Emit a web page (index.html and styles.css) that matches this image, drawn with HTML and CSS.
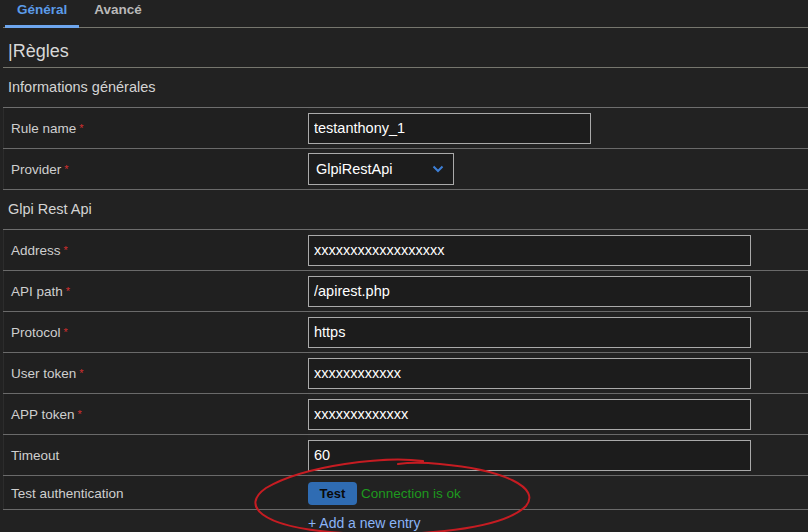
FILE: index.html
```html
<!DOCTYPE html>
<html lang="fr">
<head>
    <meta charset="UTF-8">
    <title>Règles - Glpi Rest Api</title>
    <link rel="stylesheet" href="styles.css">
</head>
<body>
    <div class="tabs">
        <a href="#" class="tab active">Général</a>
        <a href="#" class="tab">Avancé</a>
    </div>

    <div class="panel">
        <div class="title">|Règles</div>
        <div class="section">Informations générales</div>

        <div class="row">
            <div class="label">Rule name <span class="req">*</span></div>
            <div class="field"><input class="input short" type="text" value="testanthony_1"></div>
        </div>
        <div class="row">
            <div class="label">Provider <span class="req">*</span></div>
            <div class="field">
                <div class="select">
                    <span>GlpiRestApi</span>
                    <svg width="12" height="8" viewBox="0 0 12 8"><path d="M1.5 1.5 L6 6 L10.5 1.5" fill="none" stroke="#3d7fd6" stroke-width="2"/></svg>
                </div>
            </div>
        </div>

        <div class="section">Glpi Rest Api</div>

        <div class="row">
            <div class="label">Address <span class="req">*</span></div>
            <div class="field"><input class="input" type="text" value="xxxxxxxxxxxxxxxxxx"></div>
        </div>
        <div class="row">
            <div class="label">API path <span class="req">*</span></div>
            <div class="field"><input class="input" type="text" value="/apirest.php"></div>
        </div>
        <div class="row">
            <div class="label">Protocol <span class="req">*</span></div>
            <div class="field"><input class="input" type="text" value="https"></div>
        </div>
        <div class="row">
            <div class="label">User token <span class="req">*</span></div>
            <div class="field"><input class="input" type="text" value="xxxxxxxxxxxx"></div>
        </div>
        <div class="row">
            <div class="label">APP token <span class="req">*</span></div>
            <div class="field"><input class="input" type="text" value="xxxxxxxxxxxxx"></div>
        </div>
        <div class="row">
            <div class="label">Timeout</div>
            <div class="field"><input class="input" type="text" value="60"></div>
        </div>
        <div class="row row-test">
            <div class="label">Test authentication</div>
            <div class="field">
                <button class="btn-test">Test</button>
                <span class="status-ok">Connection is ok</span>
            </div>
        </div>

        <div class="add-entry"><a href="#">+ Add a new entry</a></div>
    </div>

    <!-- annotation au feutre rouge -->
    <svg class="scribble" width="808" height="532" viewBox="0 0 808 532">
        <path d="M423 461 C 385 456, 305 465, 266 488 C 240 506, 262 526, 330 532 C 400 538, 500 532, 526 506 C 541 488, 505 470, 440 464 C 420 462, 405 463, 398 464"
              fill="none" stroke="#c61c22" stroke-width="2" stroke-linecap="round"/>
    </svg>
</body>
</html>
```

FILE: styles.css
```css
body {
    margin: 0;
    background-color: #222222;
    color: #d0d0d0;
    font-family: "Liberation Sans", Arial, sans-serif;
    font-size: 14px;
    overflow: hidden;
    height: 532px;
    position: relative;
}

.tabs {
    display: flex;
    height: 27px;
    margin-left: 3px;
    border-bottom: 1px solid #76766e;
}

.tab {
    display: block;
    padding: 1px 12px 0;
    margin-left: 2px;
    line-height: 17px;
    font-size: 13.5px;
    font-weight: bold;
    color: #b9b9b9;
    text-decoration: none;
    border-bottom: 3px solid transparent;
    margin-bottom: -1px;
}

.tab.active {
    color: #5b9be8;
    border-bottom-color: #6ea6ee;
    margin-right: 1px;
}

.panel {
    margin-left: 3px;
}

.title {
    height: 39px;
    line-height: 47px;
    padding-left: 5px;
    font-size: 18px;
    color: #d8d8d8;
    border-bottom: 1px solid #76766e;
}

.section {
    height: 39px;
    line-height: 39px;
    padding-left: 5px;
    font-size: 14.5px;
    color: #d4d4d4;
    border-bottom: 1px solid #6e6e6e;
}

.row {
    display: grid;
    grid-template-columns: 305px 1fr;
    height: 40px;
    border-bottom: 1px solid #6a6a6a;
}

.label {
    display: flex;
    align-items: center;
    padding-left: 7px;
    font-size: 13.5px;
    color: #cfcfcf;
    border-left: 1px solid #2c2c2c;
    background-color: #202020;
}

.req {
    color: #d32f2f;
    font-size: 11px;
    margin-left: 3px;
}

.field {
    display: flex;
    align-items: center;
}

.input {
    box-sizing: border-box;
    width: 443px;
    height: 31px;
    padding: 0 5px;
    background-color: #1c1c1c;
    border: 1px solid #aaaaaa;
    color: #ffffff;
    font-family: "Liberation Sans", Arial, sans-serif;
    font-size: 14.5px;
    outline: none;
}

.input.short {
    width: 283px;
}

.select {
    box-sizing: border-box;
    width: 146px;
    height: 32px;
    padding: 0 9px 0 7px;
    display: flex;
    align-items: center;
    justify-content: space-between;
    background-color: #1c1c1c;
    border: 1px solid #aaaaaa;
    color: #ffffff;
    font-size: 14.5px;
}

.row-test {
    height: 33px;
    align-items: stretch;
}

.row-test .label {
    padding-top: 1px;
}

.row-test .field {
    align-items: flex-start;
    padding-top: 6px;
}

.btn-test {
    width: 49px;
    height: 23px;
    padding: 0;
    background-color: #2f6cb3;
    border: none;
    border-radius: 4px;
    color: #0a0a0a;
    font-family: "Liberation Sans", Arial, sans-serif;
    font-size: 13px;
    font-weight: bold;
}

.status-ok {
    margin-left: 4px;
    line-height: 23px;
    color: #1e9a1e;
    font-size: 13.5px;
}

.add-entry {
    padding: 5px 0 0 305px;
    font-size: 14px;
}

.add-entry a {
    color: #8ab4f8;
    text-decoration: none;
}

.scribble {
    position: absolute;
    left: 0;
    top: 0;
    pointer-events: none;
}
```
